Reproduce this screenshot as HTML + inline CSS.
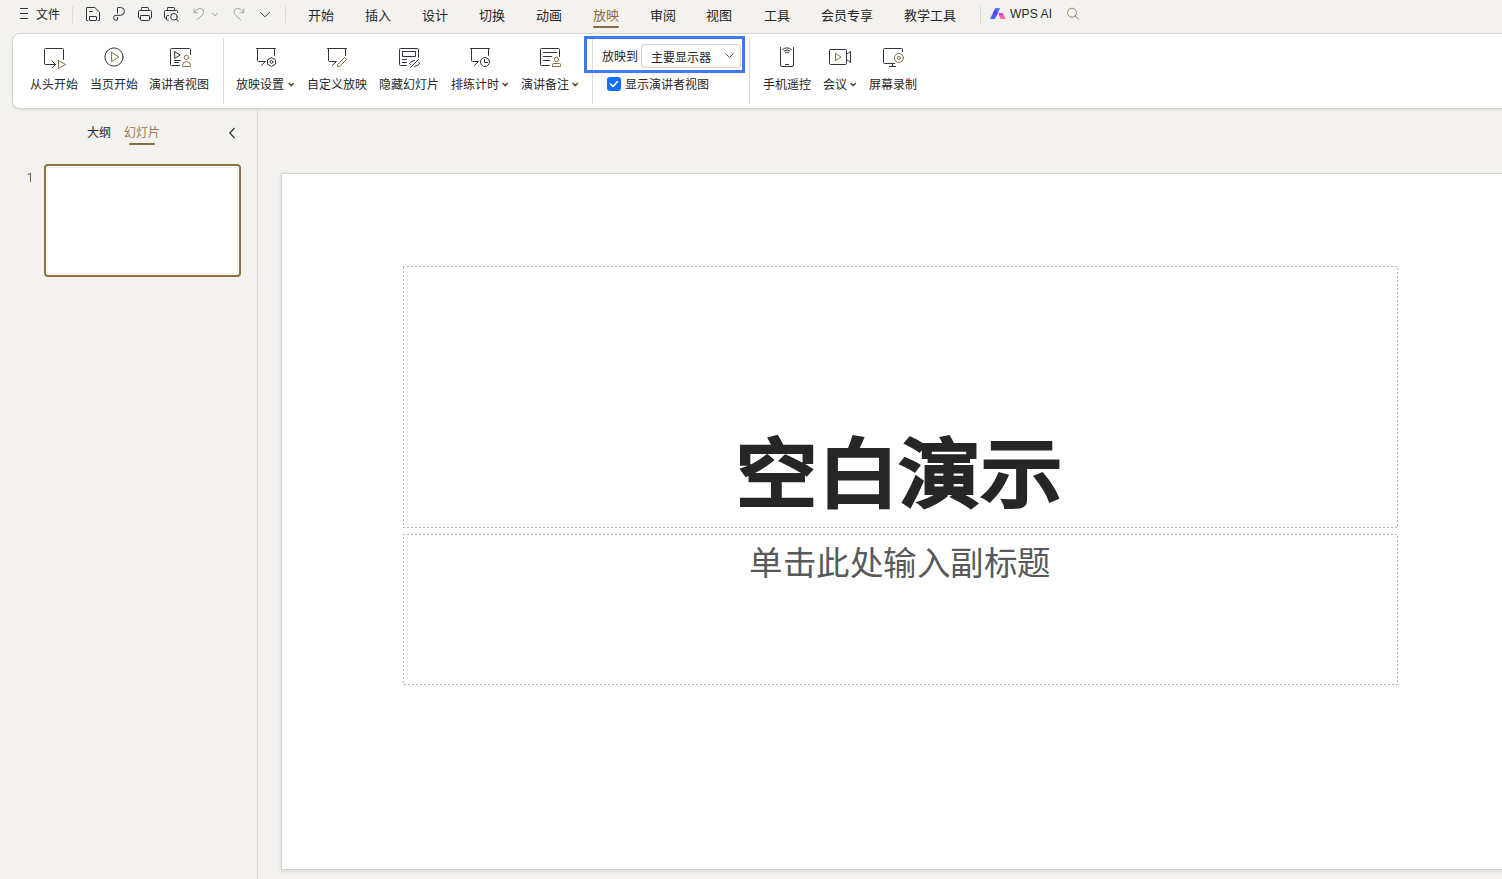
<!DOCTYPE html>
<html lang="zh-CN"><head><meta charset="utf-8">
<style>
*{margin:0;padding:0;box-sizing:border-box}
html,body{width:1502px;height:879px;overflow:hidden;background:#f3f2ee;font-family:"Liberation Sans",sans-serif;color:#262626}
.a{position:absolute}
.t{position:absolute;white-space:nowrap;line-height:1}
#ribbon{position:absolute;left:12px;top:33px;width:1520px;height:76px;background:#fff;border:1px solid #d8d6d2;border-radius:8px;box-shadow:0 1px 3px rgba(0,0,0,.10)}
.sep{position:absolute;width:1px;background:#dedcd8}
#leftsep{position:absolute;left:257px;top:109px;width:1px;height:770px;background:#dcdad6}
#slide{position:absolute;left:281px;top:173px;width:1260px;height:697px;background:#fff;border:1px solid #d3d2ce;box-shadow:0 1px 4px rgba(0,0,0,.12)}
.ph{position:absolute;border:1px dashed #b5b5b5}
.tab{font-size:13px;color:#262626}
.rl{font-size:12px;color:#262626}
svg{position:absolute;left:0;top:0;overflow:visible}
.ic{fill:none;stroke:#2f3440;stroke-width:1;stroke-linecap:round;stroke-linejoin:round}
.br{fill:none;stroke:#8f6f40;stroke-width:1;stroke-linecap:round;stroke-linejoin:round}
</style></head>
<body>
<div id="ribbon"></div>
<div id="leftsep"></div>
<div id="slide"></div>

<!-- top menu -->
<div class="t tab" style="left:36px;top:9px;font-size:12px">文件</div>
<div class="sep" style="left:72px;top:6px;height:17px"></div>
<div class="sep" style="left:285px;top:6px;height:17px"></div>
<div class="t tab" style="left:308px;top:9px">开始</div>
<div class="t tab" style="left:365px;top:9px">插入</div>
<div class="t tab" style="left:422px;top:9px">设计</div>
<div class="t tab" style="left:479px;top:9px">切换</div>
<div class="t tab" style="left:536px;top:9px">动画</div>
<div class="t tab" style="left:593px;top:9px;color:#8a6a3c">放映</div>
<div class="a" style="left:593px;top:26px;width:26px;height:2px;background:#8b6c3e;border-radius:1px"></div>
<div class="t tab" style="left:650px;top:9px">审阅</div>
<div class="t tab" style="left:706px;top:9px">视图</div>
<div class="t tab" style="left:764px;top:9px">工具</div>
<div class="t tab" style="left:821px;top:9px">会员专享</div>
<div class="t tab" style="left:903.5px;top:9px">教学工具</div>
<div class="sep" style="left:980px;top:5px;height:19px"></div>
<div class="t tab" style="left:1010px;top:8px;font-size:12px;letter-spacing:0.15px;color:#2a2a2a">WPS AI</div>

<div class="sep" style="left:223px;top:38px;height:66px"></div>
<div class="sep" style="left:592px;top:39px;height:65px"></div>
<div class="sep" style="left:749px;top:39px;height:65px"></div>

<!-- ribbon labels -->
<div class="t rl" style="left:30px;top:79px">从头开始</div>
<div class="t rl" style="left:90px;top:79px">当页开始</div>
<div class="t rl" style="left:149px;top:79px">演讲者视图</div>
<div class="t rl" style="left:236px;top:79px">放映设置</div>
<div class="t rl" style="left:307px;top:79px">自定义放映</div>
<div class="t rl" style="left:379px;top:79px">隐藏幻灯片</div>
<div class="t rl" style="left:451px;top:79px">排练计时</div>
<div class="t rl" style="left:521px;top:79px">演讲备注</div>
<div class="t rl" style="left:602px;top:51px">放映到</div>
<div class="a" style="left:641px;top:44px;width:100px;height:24px;border:1px solid #cfcfcf;border-radius:4px;background:#fff"></div>
<div class="t rl" style="left:651px;top:52px">主要显示器</div>
<div class="a" style="left:607px;top:77px;width:14px;height:14px;border-radius:3px;background:#0f6fff"></div>
<div class="t rl" style="left:625px;top:79px">显示演讲者视图</div>
<div class="t rl" style="left:763px;top:79px">手机遥控</div>
<div class="t rl" style="left:823px;top:79px">会议</div>
<div class="t rl" style="left:869px;top:79px">屏幕录制</div>

<!-- left panel -->
<div class="t rl" style="left:87px;top:127px">大纲</div>
<div class="t rl" style="left:124px;top:127px;color:#9a7d52">幻灯片</div>
<div class="a" style="left:129px;top:143px;width:26px;height:2px;background:#8b6c3e;border-radius:1px"></div>
<div class="a" style="left:44px;top:164px;width:197px;height:113px;border:2px solid #8f7144;border-radius:4px;background:#fff;box-shadow:inset 0 0 0 1px #fff,inset 0 0 0 2px #f1f0ee"></div>

<!-- slide -->
<svg width="1502" height="879" viewBox="0 0 1502 879"><g fill="none" stroke="#b4b4b4" stroke-width="1" stroke-dasharray="2 2" stroke-dashoffset="0.5"><rect x="403.5" y="266.5" width="994" height="261"/><rect x="403.5" y="534.5" width="994" height="150"/></g></svg>
<div class="t" style="left:402px;top:437.5px;width:995px;text-align:center;font-size:81px;letter-spacing:0.7px;color:#262626;-webkit-text-stroke:4.4px #262626;transform:scaleY(0.93);transform-origin:50% 0">空白演示</div>
<div class="t" style="left:402.5px;top:546.5px;width:995px;text-align:center;font-size:33.5px;letter-spacing:0.5px;color:#595959">单击此处输入副标题</div>

<svg width="1502" height="200" viewBox="0 0 1502 200">
 <!-- hamburger -->
 <path class="ic" stroke-width="1.2" d="M20.5 8.5H27.5M20.5 13.5H27.5M20.5 18.5H27.5"/>
 <!-- save -->
 <path class="ic" d="M87.8 20.5H87Q86.5 20.5 86.5 20V8Q86.5 7.5 87 7.5H94.8L99.5 12.2V20Q99.5 20.5 99 20.5H98.2"/>
 <path class="ic" d="M90 16.5H96Q96.5 16.5 96.5 17V20Q96.5 20.5 96 20.5H90Q89.5 20.5 89.5 20V17Q89.5 16.5 90 16.5L90 16.5"/>
 <path class="ic" d="M89.5 11.5H92.5"/>
 <!-- format painter -->
 <path class="ic" d="M117.5 13V8Q117.5 7.5 118 7.5H120.6A3.9 3.9 0 0 1 120.6 15.3H116A2.5 2.5 0 0 0 116 20.3H117Q117.5 20.3 117.5 19.8V17.5"/>
 <!-- print -->
 <path class="ic" d="M142.2 7.5H147.8Q148.5 7.5 148.5 8.2V9.8Q148.5 10.5 147.8 10.5H142.2Q141.5 10.5 141.5 9.8V8.2Q141.5 7.5 142.2 7.5L142.2 7.5"/>
 <path class="ic" d="M140.5 18.3H139.5Q138.5 18.3 138.5 17.3V11.5Q138.5 10.5 139.5 10.5H150.5Q151.5 10.5 151.5 11.5V17.3Q151.5 18.3 150.5 18.3H149.5"/>
 <path class="ic" d="M141.2 15.5H148.8Q149.5 15.5 149.5 16.2V19.8Q149.5 20.5 148.8 20.5H141.2Q140.5 20.5 140.5 19.8V16.2Q140.5 15.5 141.2 15.5L141.2 15.5"/>
 <!-- print preview -->
 <path class="ic" d="M168.2 7.5H173.8Q174.5 7.5 174.5 8.2V9.8Q174.5 10.5 173.8 10.5H168.2Q167.5 10.5 167.5 9.8V8.2Q167.5 7.5 168.2 7.5L168.2 7.5"/>
 <path class="ic" d="M165.5 18.3Q164.5 18.3 164.5 17.3V11.5Q164.5 10.5 165.5 10.5H176.5Q177.5 10.5 177.5 11.5V12.5"/>
 <path class="ic" d="M168.5 15.5H167.5Q166.5 15.5 166.5 16.5V19.3Q166.5 20.3 167.5 20.3H168.5"/>
 <circle class="ic" cx="174" cy="16.8" r="3.3"/>
 <path class="ic" d="M176.5 19.3L178.5 21.3"/>
 <!-- undo / redo -->
 <path class="ic" style="stroke:#a3a3a3" d="M194 9V12.7H197.6M194.5 12.2Q197 8.4 200 8.4Q203.7 8.7 203.7 12Q203.7 13.5 202 15.3L197 19.8"/>
 <path class="ic" style="stroke:#a3a3a3" d="M212.3 13.2L215 15.6L217.7 13.2"/>
 <path class="ic" style="stroke:#a3a3a3" d="M243.7 9V12.7H240.1M243.2 12.2Q240.7 8.4 237.7 8.4Q234 8.7 234 12Q234 13.5 235.7 15.3L240.7 19.8"/>
 <path class="ic" stroke-width="1.4" d="M260.5 12.3L265 16.8L269.5 12.3"/>

 <!-- wps ai logo -->
 <defs>
  <linearGradient id="g1" x1="0" y1="1" x2="1" y2="0"><stop offset="0" stop-color="#3d8bff"/><stop offset=".55" stop-color="#5b3df5"/><stop offset="1" stop-color="#2fb2ff"/></linearGradient>
  <linearGradient id="g2" x1="0" y1="0" x2="1" y2="1"><stop offset="0" stop-color="#e21bff"/><stop offset="1" stop-color="#ff9a7a"/></linearGradient>
 </defs>
 <path fill="url(#g1)" d="M990 19L995.3 8H1000.3L994.9 19L990 19"/>
 <path fill="url(#g2)" d="M998.3 13H1002.7L1006 19H1000.5L998.3 13"/>
 <!-- search -->
 <circle fill="none" stroke="#9d8c72" stroke-width="1" cx="1072" cy="12.7" r="4.5"/>
 <path fill="none" stroke="#9d8c72" stroke-width="1" stroke-linecap="round" d="M1075.3 16L1078.7 19.5"/>

 <!-- 从头开始 -->
 <path class="ic" d="M63.5 59.5V49.5Q63.5 48.5 62.5 48.5H45.5Q44.5 48.5 44.5 49.5V63.5Q44.5 64.5 45.5 64.5H55.5M52.5 61.5L55.5 64.5L52.5 67.5"/>
 <path class="br" d="M58.5 60.5V68.5L65.5 64.5L58.5 60.5"/>
 <!-- 当页开始 -->
 <circle class="ic" cx="114" cy="57" r="9.1" stroke-width="1.2"/>
 <path class="br" d="M111.6 52.5V61.5L119 57L111.6 52.5"/>
 <!-- 演讲者视图 -->
 <path class="ic" d="M190.5 54.5V49.5Q190.5 48.5 189.5 48.5H171.5Q170.5 48.5 170.5 49.5V64.5Q170.5 65.5 171.5 65.5H179.5"/>
 <path class="ic" d="M174.7 51.7V58.3L180.2 55L174.7 51.7"/>
 <path class="ic" d="M174.5 60.5H180.5M174.5 62.5H178.5"/>
 <circle class="br" cx="186.4" cy="57.4" r="2.2"/>
 <path class="br" d="M182.5 66.5V65.5A4 4 0 0 1 190.5 65.5V66.5L182.5 66.5"/>
 <!-- 放映设置 -->
 <path class="ic" d="M256.5 48.5H275.5M257.5 48.5V60.5Q257.5 61.5 258.5 61.5H265.5L261.3 65.5M274.5 48.5V55.5"/>
 <path class="ic" d="M271.5 57.6L275.5 59.8V64.2L271.5 66.4L267.5 64.2V59.8L271.5 57.6"/>
 <circle class="ic" cx="271.5" cy="62" r="1.4"/>
 <!-- 自定义放映 -->
 <path class="ic" d="M327.5 48.5H346.5M328.5 48.5V60.5Q328.5 61.5 329.5 61.5H336.5L332.3 65.5M345.5 48.5V55.5"/>
 <path class="br" d="M344.6 57.4L346.6 59.4L339.6 66.4L337.5 66.5L337.6 64.4L344.6 57.4"/>
 <!-- 隐藏幻灯片 -->
 <path class="ic" d="M418.5 57.5V49.5Q418.5 48.5 417.5 48.5H400.5Q399.5 48.5 399.5 49.5V64.5Q399.5 65.5 400.5 65.5H406.5"/>
 <path class="ic" d="M402.5 51.5H415.5V56.5H402.5L402.5 51.5"/>
 <path class="ic" d="M402.5 59.5H406.5M402.5 62.5H406.5"/>
 <path class="ic" d="M410.5 67.5L418.5 59.5M410.8 64.6L409.5 63.3Q411.5 60.6 414.5 60.4M418.6 62.3L419.8 63.3Q417.8 66.2 414.5 66.4"/>
 <!-- 排练计时 -->
 <path class="ic" d="M470.5 48.5H489.5M471.5 48.5V60.5Q471.5 61.5 472.5 61.5H478.5L474.3 65.5M488.5 48.5V55.5"/>
 <circle class="ic" cx="485" cy="62" r="4.5"/>
 <path class="ic" d="M484.5 59.5V62.5H487.5"/>
 <!-- 演讲备注 -->
 <path class="ic" d="M559.5 56.5V49.5Q559.5 48.5 558.5 48.5H541.5Q540.5 48.5 540.5 49.5V64.5Q540.5 65.5 541.5 65.5H549.5"/>
 <path class="ic" d="M543.5 52.5H556.5M543.5 56.5H551.5M543.5 60.5H549.5"/>
 <circle class="br" cx="556.4" cy="59.4" r="2.2"/>
 <path class="br" d="M552.5 66.5V64.5Q552.5 63.5 553.5 63.5H559.5Q560.5 63.5 560.5 64.5V66.5L552.5 66.5"/>
 <!-- 放映到 chevron -->
 <path fill="none" stroke="#555" stroke-width="1" d="M725.5 53.5L729.5 57.5L733.5 53.5"/>
 <!-- checkbox tick -->
 <path fill="none" stroke="#fff" stroke-width="1.6" stroke-linecap="round" stroke-linejoin="round" d="M610.5 84L613 86.5L617.5 81.5"/>
 <!-- 手机遥控 -->
 <path class="ic" d="M780.5 47.5V65Q780.5 66.5 782 66.5H792Q793.5 66.5 793.5 65V47.5"/>
 <path class="ic" d="M785.5 64.5H788.5"/>
 <path class="ic" d="M782.5 49.5Q787 46 791.5 49.5M784 51Q787 48.6 790 51M785.3 52.7Q787 51.3 788.7 52.7"/>
 <!-- 会议 -->
 <path class="ic" d="M830.5 49.5H845.5Q846.5 49.5 846.5 50.5V63.5Q846.5 64.5 845.5 64.5H830.5Q829.5 64.5 829.5 63.5V50.5Q829.5 49.5 830.5 49.5L830.5 49.5"/>
 <path class="ic" d="M846.5 54.3L850.5 51.5V62.5L846.5 59.5"/>
 <path class="br" d="M835.5 53.4V60.6L841 57L835.5 53.4"/>
 <!-- 屏幕录制 -->
 <path class="ic" d="M902.5 51.5V49.5Q902.5 48.5 901.5 48.5H884.5Q883.5 48.5 883.5 49.5V62.5Q883.5 63.5 884.5 63.5H894.5M892.5 63.5V66.5M889.5 66.5H895.5"/>
 <circle class="br" cx="898.9" cy="57.9" r="4.5"/>
 <circle class="br" cx="898.9" cy="57.9" r="1.5"/>
 <!-- dropdown chevrons in ribbon -->
 <path fill="none" stroke="#5e4b2e" stroke-width="1.5" stroke-linejoin="round" d="M288.6 83L291.2 85.6L293.8 83M502.6 83L505.2 85.6L507.8 83M572.6 83L575.2 85.6L577.8 83M850.6 83L853.2 85.6L855.8 83"/>
 <!-- slide number -->
 <path fill="none" stroke="#8a6a3c" stroke-width="1.1" stroke-linecap="round" d="M28.3 174.6L30.5 173.4V181.8"/>
 <!-- left panel chevron -->
 <path fill="none" stroke="#333" stroke-width="1.2" d="M234.5 128L229.8 133L234.5 138"/>
</svg>

<!-- blue annotation -->
<div class="a" style="left:584px;top:36px;width:161px;height:37px;border:3px solid #3c7cf2"></div>
</body></html>
